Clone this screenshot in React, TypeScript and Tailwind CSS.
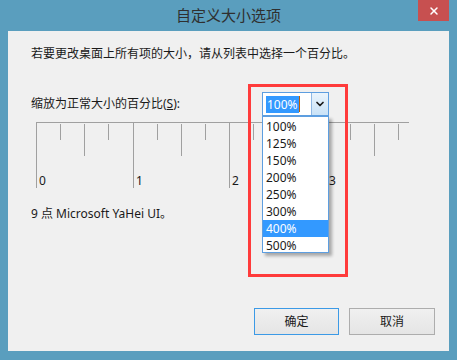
import { ChevronDown, X } from "lucide-react";

const SIZES = ["100%", "125%", "150%", "200%", "250%", "300%", "400%", "500%"];

// ruler: quarter ticks, numbered every 4th
function Ruler() {
  const ticks = Array.from({ length: 16 }, (_, i) => i);
  return (
    <svg width="380" height="68" className="block">
      <line x1="5.5" y1="0.5" x2="378" y2="0.5" stroke="#a0a0a0" />
      {ticks.map((i) => {
        const x = Math.round(5 + i * 24.125) + 0.5;
        const kind = i % 4;
        const y1 = kind === 0 ? 0 : 2;
        const y2 = kind === 0 ? 66 : kind === 2 ? 34 : 18;
        return <line key={i} x1={x} y1={y1} x2={x} y2={y2} stroke="#a0a0a0" />;
      })}
      {[0, 1, 2, 3].map((n) => (
        <text
          key={n}
          x={Math.round(8 + n * 96.5)}
          y={63}
          fontSize="12"
          fill="#1a1a1a"
          fontFamily="'Noto Sans', 'Noto Sans CJK SC', sans-serif"
        >
          {n}
        </text>
      ))}
    </svg>
  );
}

function SizeCombo() {
  return (
    <div className="relative w-[67px] h-[24px] border border-[#5d9ee0] bg-white flex">
      <div className="flex-1 flex items-center pl-[3px]">
        <span className="bg-[#3399ff] text-white leading-[17px] px-[1px]">100%</span>
        <span className="w-[1px] h-[16px] bg-[#c06000]" />
      </div>
      <div className="w-[17px] border-l border-[#8fb8e4] bg-gradient-to-b from-[#eaf4fc] to-[#c9e2f7] flex items-center justify-center">
        <ChevronDown size={12} strokeWidth={3.5} className="text-[#1a1a1a]" />
      </div>

      {/* open list */}
      <div className="absolute left-[-1px] top-[23px] w-[67px] h-[137px] border border-[#5d9ee0] bg-white shadow-[3px_3px_3px_rgba(0,0,0,0.3)] pt-[1px]">
        {SIZES.map((s) => (
          <div
            key={s}
            className={
              s === "400%"
                ? "h-[17px] leading-[17px] pl-[3px] bg-[#3399ff] text-white"
                : "h-[17px] leading-[17px] pl-[3px] text-[#1a1a1a]"
            }
          >
            {s}
          </div>
        ))}
      </div>
    </div>
  );
}

export default function App() {
  return (
    <div className="relative w-[457px] h-[360px] bg-[#5a9ebe] flex flex-col font-['Noto_Sans','Noto_Sans_CJK_SC',sans-serif] text-[12px] text-[#1a1a1a]">
      {/* title bar */}
      <div className="relative h-[31px] flex items-center justify-center">
        <span className="text-[15px] text-[#2f2f2f] leading-none">自定义大小选项</span>
        <div className="absolute right-[8px] top-0 w-[31px] h-[21px] bg-[#c75050] flex items-center justify-center">
          <X size={12} strokeWidth={3} className="text-white" />
        </div>
      </div>

      {/* body */}
      <div className="mx-[8px] h-[320px] bg-[#f0f0f0] flex flex-col pl-[23px] pr-[14px] pt-[15px] pb-[16px]">
        <p className="leading-[16px]">若要更改桌面上所有项的大小，请从列表中选择一个百分比。</p>

        <div className="mt-[30px] flex items-center relative z-10">
          <span className="w-[231px] leading-[16px]">
            缩放为正常大小的百分比(<span className="underline">S</span>):
          </span>
          <SizeCombo />
        </div>

        <div className="mt-[6px]">
          <Ruler />
        </div>

        <p className="mt-[16px] leading-[16px]">9 点 Microsoft YaHei UI。</p>

        <div className="mt-auto flex justify-end gap-[10px]">
          <button className="w-[85px] h-[27px] border border-[#3c9ae6] bg-gradient-to-b from-[#f0f0f0] to-[#e5e5e5] text-[12px]">
            确定
          </button>
          <button className="w-[86px] h-[27px] border border-[#adadad] bg-gradient-to-b from-[#f0f0f0] to-[#e5e5e5] text-[12px]">
            取消
          </button>
        </div>
      </div>

      {/* red annotation box */}
      <div className="absolute left-[248px] top-[84px] w-[100px] h-[193px] border-[3px] border-[#ff3b3b] z-20 pointer-events-none" />
    </div>
  );
}
